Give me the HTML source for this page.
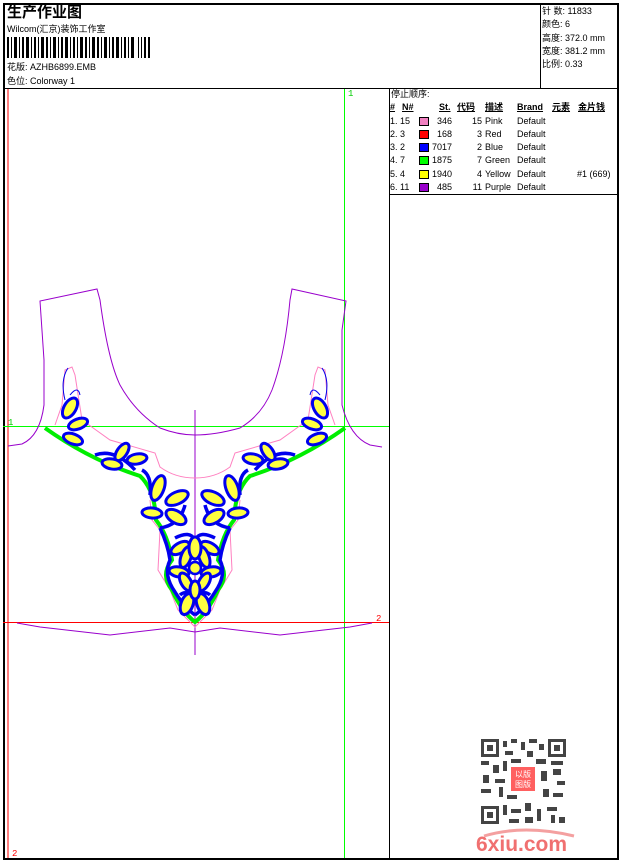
<!DOCTYPE html>
<html><head><meta charset="utf-8"><style>
*{margin:0;padding:0}
body{width:620px;height:860px;background:#fff;position:relative;overflow:hidden;font-family:"Liberation Sans","Noto Sans CJK SC",sans-serif;color:#000}
.t{position:absolute;font-size:9px;line-height:10px;white-space:nowrap}
.bx{position:absolute;border:1px solid #000;box-sizing:border-box}
.sw{position:absolute;width:10px;height:9px;border:1px solid #000;box-sizing:border-box}
</style></head><body>
<div class="bx" style="left:3px;top:3px;width:616px;height:857px;border-width:2px"></div>
<div style="position:absolute;left:3px;top:88px;width:616px;height:1px;background:#000"></div>
<div style="position:absolute;left:540px;top:3px;width:1px;height:86px;background:#000"></div>
<div style="position:absolute;left:389px;top:88px;width:1px;height:772px;background:#000"></div>
<div style="position:absolute;left:389px;top:194px;width:230px;height:1px;background:#000"></div>

<div class="t" style="left:7px;top:5px;font-size:15px;line-height:16px;font-weight:bold">生产作业图</div>
<div class="t" style="left:7px;top:24px">Wilcom(汇京)装饰工作室</div>
<svg style="position:absolute;left:7px;top:37px" width="145" height="21">
<g fill="#000">
<rect x="0" y="0" width="2" height="21"/><rect x="4" y="0" width="1" height="21"/><rect x="7" y="0" width="3" height="21"/><rect x="12" y="0" width="1" height="21"/><rect x="15" y="0" width="2" height="21"/><rect x="19" y="0" width="3" height="21"/><rect x="24" y="0" width="1" height="21"/><rect x="27" y="0" width="2" height="21"/><rect x="31" y="0" width="1" height="21"/><rect x="34" y="0" width="3" height="21"/><rect x="39" y="0" width="2" height="21"/><rect x="43" y="0" width="1" height="21"/><rect x="46" y="0" width="3" height="21"/><rect x="51" y="0" width="1" height="21"/><rect x="54" y="0" width="2" height="21"/><rect x="58" y="0" width="3" height="21"/><rect x="63" y="0" width="1" height="21"/><rect x="66" y="0" width="2" height="21"/><rect x="70" y="0" width="1" height="21"/><rect x="73" y="0" width="3" height="21"/><rect x="78" y="0" width="2" height="21"/><rect x="82" y="0" width="1" height="21"/><rect x="85" y="0" width="3" height="21"/><rect x="90" y="0" width="2" height="21"/><rect x="94" y="0" width="1" height="21"/><rect x="97" y="0" width="3" height="21"/><rect x="102" y="0" width="1" height="21"/><rect x="105" y="0" width="2" height="21"/><rect x="109" y="0" width="3" height="21"/><rect x="114" y="0" width="1" height="21"/><rect x="117" y="0" width="2" height="21"/><rect x="121" y="0" width="1" height="21"/><rect x="124" y="0" width="3" height="21"/><rect x="131" y="0" width="1" height="21"/><rect x="134" y="0" width="1" height="21"/><rect x="137" y="0" width="2" height="21"/><rect x="141" y="0" width="2" height="21"/>
</g></svg>
<div class="t" style="left:7px;top:62px">花版: AZHB6899.EMB</div>
<div class="t" style="left:7px;top:76px">色位: Colorway 1</div>

<div class="t" style="left:542px;top:6px">针 数: 11833</div>
<div class="t" style="left:542px;top:19px">颜色: 6</div>
<div class="t" style="left:542px;top:33px">高度: 372.0 mm</div>
<div class="t" style="left:542px;top:46px">宽度: 381.2 mm</div>
<div class="t" style="left:542px;top:59px">比例: 0.33</div>

<div class="t" style="left:391px;top:89px">停止顺序:</div>
<div class="t" style="left:390px;top:102px;font-weight:bold;text-decoration:underline">#</div>
<div class="t" style="left:402px;top:102px;font-weight:bold;text-decoration:underline">N#</div>
<div class="t" style="left:439px;top:102px;font-weight:bold;text-decoration:underline">St.</div>
<div class="t" style="left:457px;top:102px;font-weight:bold;text-decoration:underline">代码</div>
<div class="t" style="left:485px;top:102px;font-weight:bold;text-decoration:underline">描述</div>
<div class="t" style="left:517px;top:102px;font-weight:bold;text-decoration:underline">Brand</div>
<div class="t" style="left:552px;top:102px;font-weight:bold;text-decoration:underline">元素</div>
<div class="t" style="left:578px;top:102px;font-weight:bold;text-decoration:underline">金片钱</div>

<div style="position:absolute;left:390px;top:116px">
<div class="t" style="top:0">1.&nbsp;15</div><div class="sw" style="left:29px;top:1px;background:#f080c0"></div><div class="t" style="left:42px;top:0;width:20px;text-align:right">346</div><div class="t" style="left:72px;top:0;width:20px;text-align:right">15</div><div class="t" style="left:95px;top:0">Pink</div><div class="t" style="left:127px;top:0">Default</div>
<div class="t" style="top:13px">2.&nbsp;3</div><div class="sw" style="left:29px;top:14px;background:#ff0000"></div><div class="t" style="left:42px;top:13px;width:20px;text-align:right">168</div><div class="t" style="left:72px;top:13px;width:20px;text-align:right">3</div><div class="t" style="left:95px;top:13px">Red</div><div class="t" style="left:127px;top:13px">Default</div>
<div class="t" style="top:26px">3.&nbsp;2</div><div class="sw" style="left:29px;top:27px;background:#0000ff"></div><div class="t" style="left:42px;top:26px;width:20px;text-align:right">7017</div><div class="t" style="left:72px;top:26px;width:20px;text-align:right">2</div><div class="t" style="left:95px;top:26px">Blue</div><div class="t" style="left:127px;top:26px">Default</div>
<div class="t" style="top:39px">4.&nbsp;7</div><div class="sw" style="left:29px;top:40px;background:#00ff00"></div><div class="t" style="left:42px;top:39px;width:20px;text-align:right">1875</div><div class="t" style="left:72px;top:39px;width:20px;text-align:right">7</div><div class="t" style="left:95px;top:39px">Green</div><div class="t" style="left:127px;top:39px">Default</div>
<div class="t" style="top:53px">5.&nbsp;4</div><div class="sw" style="left:29px;top:54px;background:#ffff00"></div><div class="t" style="left:42px;top:53px;width:20px;text-align:right">1940</div><div class="t" style="left:72px;top:53px;width:20px;text-align:right">4</div><div class="t" style="left:95px;top:53px">Yellow</div><div class="t" style="left:127px;top:53px">Default</div><div class="t" style="left:187px;top:53px">#1 (669)</div>
<div class="t" style="top:66px">6.&nbsp;11</div><div class="sw" style="left:29px;top:67px;background:#9900cc"></div><div class="t" style="left:42px;top:66px;width:20px;text-align:right">485</div><div class="t" style="left:72px;top:66px;width:20px;text-align:right">11</div><div class="t" style="left:95px;top:66px">Purple</div><div class="t" style="left:127px;top:66px">Default</div>
</div>

<svg style="position:absolute;left:0;top:0" width="389" height="860">
<line x1="8" y1="89" x2="8" y2="858" stroke="#f00"/>
<line x1="344.5" y1="89" x2="344.5" y2="858" stroke="#0f0"/>
<line x1="3" y1="426.5" x2="389" y2="426.5" stroke="#0f0"/>
<line x1="3" y1="622.5" x2="389" y2="622.5" stroke="#f00"/>
<text x="348" y="96" font-size="9" fill="#0c0" font-family="Liberation Mono">1</text>
<text x="8" y="425" font-size="9" fill="#0c0" font-family="Liberation Mono">1</text>
<text x="376" y="621" font-size="9" fill="#f00" font-family="Liberation Mono">2</text>
<text x="12" y="856" font-size="9" fill="#f00" font-family="Liberation Mono">2</text>
<g fill="none" stroke="#9900cc" stroke-width="1">
<path d="M8 446 L22 444 Q40 436 44 405 L44 360 L40 301 L97 289 L100 300 Q108 360 120 385 Q135 412 160 428 Q178 435 195 435 Q215 435 240 428 Q262 415 272 390 Q285 355 290 300 L292 289 L346 301 L342 330 L342 405 Q350 437 370 445 L382 447"/>
<path d="M17 623 L40 627 L110 635 L170 628 L195 632 L220 628 L280 635 L350 627 L372 623"/>
<line x1="195" y1="410" x2="195" y2="655"/>
</g>
<g fill="none" stroke="#ff80c0" stroke-width="1">
<path d="M55 425 L62 405 L65 370 L72 367 L75 375 L82 420 L110 440 L155 453 L160 467 Q175 478 195 478 Q215 478 230 467 L235 453 L280 440 L308 420 L315 375 L318 367 L325 370 L328 405 L335 425"/>
<path d="M150 500 L152 520 L160 530 L158 570 L170 590 L178 610 L195 627 L212 610 L220 590 L232 570 L230 530 L238 520 L240 500"/>
</g>
<path d="M45 428 Q90 460 140 476 Q155 490 156 520 Q168 535 172 560 Q160 575 172 590 Q182 612 195 622 Q208 612 218 590 Q230 575 218 560 Q222 535 234 520 Q235 490 250 476 Q300 460 345 428" fill="none" stroke="#00ee00" stroke-width="4"/>
<g id="L">
<g fill="none" stroke="#0000ee" stroke-width="3.5">
<path d="M95 455 Q115 448 135 470"/>
<path d="M160 528 Q168 545 170 560 Q163 575 175 592 Q185 608 195 615"/>
<path d="M175 538 Q190 530 195 540"/>
<path d="M180 595 Q185 590 195 596"/>
<path d="M185 505 Q180 525 160 528"/>
<path d="M142 470 Q152 475 150 495"/>
</g>
<g fill="#ffff40" stroke="#0000ee" stroke-width="3">
<ellipse cx="70" cy="408" rx="6" ry="11" transform="rotate(30 70 408)"/>
<ellipse cx="78" cy="424" rx="5" ry="10" transform="rotate(70 78 424)"/>
<ellipse cx="73" cy="439" rx="5" ry="10" transform="rotate(110 73 439)"/>
<ellipse cx="122" cy="452" rx="5" ry="10" transform="rotate(35 122 452)"/>
<ellipse cx="137" cy="459" rx="5" ry="10" transform="rotate(80 137 459)"/>
<ellipse cx="112" cy="464" rx="5" ry="10" transform="rotate(100 112 464)"/>
<ellipse cx="158" cy="488" rx="6" ry="13" transform="rotate(20 158 488)"/>
<ellipse cx="177" cy="498" rx="6" ry="12" transform="rotate(65 177 498)"/>
<ellipse cx="176" cy="517" rx="6" ry="11" transform="rotate(120 176 517)"/>
<ellipse cx="152" cy="513" rx="5" ry="10" transform="rotate(95 152 513)"/>
<ellipse cx="180" cy="548" rx="5" ry="10" transform="rotate(60 180 548)"/>
<ellipse cx="186" cy="557" rx="5" ry="11" transform="rotate(20 186 557)"/>
<ellipse cx="179" cy="572" rx="5" ry="10" transform="rotate(100 179 572)"/>
<ellipse cx="186" cy="582" rx="5" ry="10" transform="rotate(150 186 582)"/>
<ellipse cx="187" cy="604" rx="6" ry="11" transform="rotate(20 187 604)"/>
</g>
<path d="M65 400 Q60 380 68 368 M70 395 Q78 385 80 395" fill="none" stroke="#0000ee" stroke-width="1"/>
</g>
<use href="#L" transform="translate(390,0) scale(-1,1)"/>
<g fill="#ffff40" stroke="#0000ee" stroke-width="3">
<ellipse cx="195" cy="548" rx="6" ry="11"/>
<ellipse cx="195" cy="590" rx="5" ry="9"/>
</g>
<circle cx="195" cy="568" r="6" fill="#ffff40" stroke="#0000ee" stroke-width="2.5"/>
</svg>

<svg style="position:absolute;left:481px;top:739px" width="85" height="85">
<g fill="#444">
<rect x="0" y="0" width="18" height="18"/><rect x="67" y="0" width="18" height="18"/><rect x="0" y="67" width="18" height="18"/>
</g>
<g fill="#fff"><rect x="3" y="3" width="12" height="12"/><rect x="70" y="3" width="12" height="12"/><rect x="3" y="70" width="12" height="12"/></g>
<g fill="#444"><rect x="6" y="6" width="6" height="6"/><rect x="73" y="6" width="6" height="6"/><rect x="6" y="73" width="6" height="6"/>
<rect x="22" y="2" width="4" height="6"/><rect x="30" y="0" width="6" height="4"/><rect x="40" y="3" width="4" height="8"/><rect x="48" y="0" width="8" height="4"/><rect x="58" y="5" width="5" height="6"/>
<rect x="24" y="12" width="8" height="4"/><rect x="46" y="12" width="6" height="6"/><rect x="0" y="22" width="8" height="4"/><rect x="12" y="26" width="6" height="8"/><rect x="22" y="22" width="4" height="10"/><rect x="30" y="20" width="10" height="4"/><rect x="55" y="20" width="10" height="5"/><rect x="70" y="22" width="12" height="4"/>
<rect x="2" y="36" width="6" height="8"/><rect x="14" y="40" width="10" height="4"/><rect x="60" y="32" width="6" height="10"/><rect x="72" y="30" width="8" height="6"/><rect x="76" y="42" width="8" height="4"/>
<rect x="0" y="50" width="10" height="4"/><rect x="18" y="48" width="4" height="10"/><rect x="26" y="56" width="10" height="4"/><rect x="62" y="50" width="6" height="8"/><rect x="72" y="54" width="10" height="4"/>
<rect x="22" y="66" width="4" height="10"/><rect x="30" y="70" width="10" height="4"/><rect x="44" y="64" width="6" height="8"/><rect x="56" y="70" width="4" height="12"/><rect x="66" y="68" width="10" height="4"/><rect x="70" y="76" width="4" height="8"/><rect x="78" y="78" width="6" height="6"/><rect x="28" y="80" width="10" height="4"/><rect x="44" y="78" width="8" height="6"/>
</g>
<rect x="30" y="28" width="24" height="24" fill="#ff6060"/>
<text x="42" y="38" font-size="8" fill="#fff" text-anchor="middle" font-family="Noto Sans CJK SC">以版</text>
<text x="42" y="48" font-size="8" fill="#fff" text-anchor="middle" font-family="Noto Sans CJK SC">图版</text>
</svg>
<svg style="position:absolute;left:474px;top:826px" width="105" height="28">
<path d="M10 10 Q50 -2 100 10" fill="none" stroke="#f4a0a0" stroke-width="3"/>
<text x="2" y="25" font-size="21" font-weight="bold" fill="#f07070" font-family="Liberation Sans">6xiu.com</text>
</svg>
</body></html>
